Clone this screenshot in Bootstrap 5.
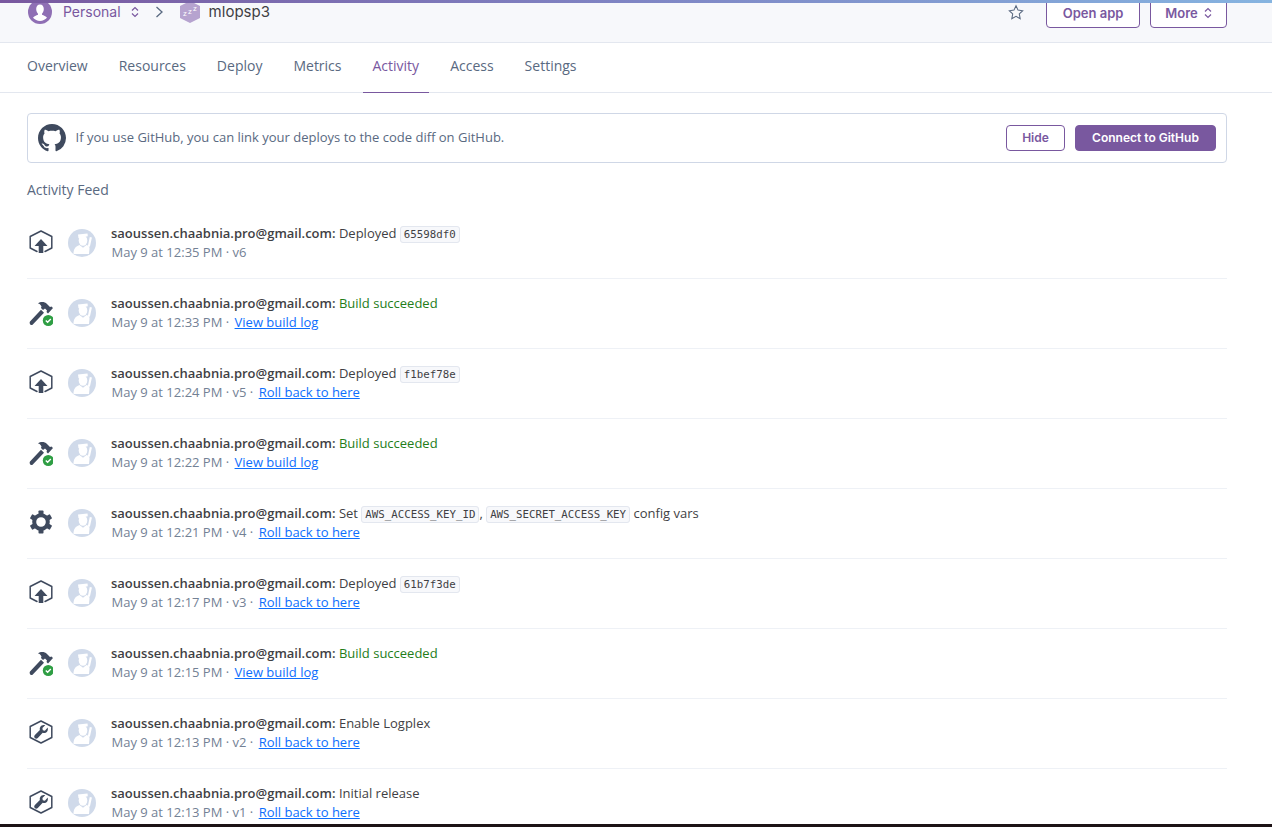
<!DOCTYPE html>
<html lang="en">
<head>
<meta charset="utf-8">
<title>mlopsp3 · Activity</title>
<link href="https://cdn.jsdelivr.net/npm/bootstrap@5.3.0/dist/css/bootstrap.min.css" rel="stylesheet">
<style>
html,body{height:827px;overflow:hidden}
body{font-family:"Open Sans","Liberation Sans",sans-serif;font-size:13px;color:#596981;background:#fff;display:flex;flex-direction:column}
.ui{font-family:Inter,"Liberation Sans",sans-serif}
.topline{height:3px;flex:none;background:linear-gradient(90deg,#79589f 0%,#7f85c4 50%,#86b4e0 100%)}
.apphead{height:40px;flex:none;background:#f7f8fb;border-bottom:1px solid #e3e7ef;padding:0 45px 0 28px;overflow:hidden}
.apphead-in{height:39px;margin-top:-11px}
.crumb{color:#79589f;font-size:14px;margin-left:11px}
.appname{color:#3f3f44;font-size:15px;line-height:20px;margin-left:9px}
.hbtn{width:94px;height:39px;margin-top:-6px;border:1px solid #79589f;border-radius:4px;background:#fff;color:#79589f;font-size:13px;font-weight:600;padding:0 0 4px;display:flex;align-items:flex-end;justify-content:center;line-height:20px;gap:6px}
.hbtn.more{width:77px;margin-left:10px}
.chev{margin-left:10px;margin-top:1px}
.chev-r{margin-left:16px}
.zhex{margin-left:17px}
.fav{margin-left:auto;margin-right:22px}
.tabbar{height:50px;flex:none;border-bottom:1px solid #e3e7ef;padding-left:17px;margin:0}
.tabitem{height:50px;padding:0 10px;margin-right:11px;line-height:45px;font-size:14px;color:#596981;text-decoration:none;display:block;border-bottom:1px solid transparent}
.tabitem.on{color:#79589f;border-bottom-color:#79589f}
.pagebody{padding:20px 45px 0 27px}
.banner{height:50px;border:1px solid #cfd7e6;border-radius:4px;padding:0 10px}
.banner-text{color:#596981;font-size:13px;margin-left:9.500px}
.bbtn{height:26px;font-size:12px;font-weight:600;border-radius:4px;padding:0;line-height:24px;border:1px solid #79589f}
.bbtn-hide{width:59px;background:#fff;color:#79589f}
.bbtn-go{width:141px;background:#79589f;color:#fff;margin-left:10px}
.feedtitle{font-size:14px;color:#596981;line-height:20px;margin:17px 0 9px}
.feedrow{height:70px;border-bottom:1px solid #eef1f6;padding:14px 0 0 2px}
.feedrow:last-child{border-bottom:0}
.ico{width:24px;height:24px;margin-top:7px;flex:none}
.ico-b{height:26px}
.avatar{width:28px;height:28px;margin:6px 15px 0 15px;flex:none}
.l1,.l2{line-height:20px;height:20px;white-space:nowrap}
.l1{color:#3f3f44}
.l1 b{font-weight:600}
.l2{color:#738195;padding-left:.5px;margin-top:-1px}
.ok{color:#247d18}
.l2 a{color:#0d6efd;margin-left:2px}
.sha{font-family:"DejaVu Sans Mono","Liberation Mono",monospace;font-size:10.750px;color:#3f3f44;background:#f7f8fb;border:1px solid #e3e7ef;border-radius:3px;padding:1px 3px}
.footline{position:fixed;left:0;right:0;bottom:0;height:3px;background:#1d1316}
</style>
</head>
<body>
<svg width="0" height="0" class="position-absolute">
<defs>
<symbol id="i-av" viewBox="0 0 28 28"><circle cx="14" cy="14" r="14" fill="#d0daea"/><g fill="#fff"><ellipse cx="15" cy="11.500" rx="4.300" ry="5.200"/><path d="M10 5.500 19.500 4.500l.3 2.800-9.300 2z"/><path d="M5.500 25c0-4.500 1.500-7.500 6-9l3.500 2.800 3.500-2.800c2 .7 3 1.800 3 3.500l-.5 5.500z"/><path d="M21.800 8l2.100.6-2 9.200-2.100-.6z"/></g></symbol>
<symbol id="i-dep" viewBox="0 0 24 24"><path fill="none" stroke="#3f4a5e" stroke-width="1.500" stroke-linejoin="round" stroke-linecap="round" d="M8 21.500 1.200 18V6.500L12 1l10.800 5.500V18L16 21.500"/><path fill="#3f4a5e" d="M12 9 18.500 16H14.300V23H9.700V16H5.500z"/></symbol>
<symbol id="i-bld" viewBox="0 0 24 26"><path fill="#3f4a5e" d="M1 21.500 12 9.800l3 2.900L3.800 24.500c-.8.700-1.800.7-2.500 0-.7-.7-.9-2.200-.3-3zM9 3.500C11.500 1.500 15.500 1.500 18 4l3 3 1.500-.5 1.500 1.500-5 5.500-1.500-1.500.5-1.500-2-2-2 1.500-2-2 .5-1.500C11.500 4.500 10.500 3.800 9 3.500z"/><circle cx="19.300" cy="20.500" r="5.500" fill="#2f9e44"/><path fill="none" stroke="#fff" stroke-width="1.400" d="M16.800 20.500l1.800 1.800 3.200-3.400"/></symbol>
<symbol id="i-wr" viewBox="0 0 24 24"><path fill="none" stroke="#3f4a5e" stroke-width="1.500" stroke-linejoin="round" d="M12 1 22.800 6.500v11L12 23 1.200 17.500v-11z"/><path fill="#3f4a5e" d="M18.700 7.500c.6 2.500-.2 4.400-2 5.200-1 .5-2 .4-3 .1L8.800 18c-.9.900-2.200.9-3 .1-.8-.8-.8-2.100.1-3l5-5c-.3-1.200-.2-2.300.4-3.200 1-1.500 2.900-2.300 4.900-1.600l-2.800 2.800.4 2.200 2.100.4z"/></symbol>
<symbol id="i-gear" viewBox="0 0 24 24"><g fill="#3f4a5e"><g id="tooth"><rect x="9.500" y=".5" width="5" height="5" rx=".8"/></g><use href="#tooth" transform="rotate(60 12 12)"/><use href="#tooth" transform="rotate(120 12 12)"/><use href="#tooth" transform="rotate(180 12 12)"/><use href="#tooth" transform="rotate(240 12 12)"/><use href="#tooth" transform="rotate(300 12 12)"/></g><circle cx="12" cy="12" r="6.800" fill="none" stroke="#3f4a5e" stroke-width="4"/></symbol>
</defs>
</svg>

<div class="topline"></div>
<header class="apphead">
  <div class="apphead-in d-flex align-items-center">
    <svg width="24" height="24" viewBox="0 0 24 24"><circle cx="12" cy="12" r="12" fill="#8f6fb4"/><path fill="#fff" d="M12 4.500c2.400 0 3.800 2 3.800 4.500s-1.200 4-1.800 4.800v1c1.800.7 4 1.300 5 3a9.500 9.500 0 0 1-14 0c1-1.700 3.200-2.300 5-3v-1C9.400 13 8.200 11.500 8.200 9s1.400-4.500 3.800-4.500z"/></svg>
    <span class="crumb ui">Personal</span>
    <svg class="chev" width="8" height="12" viewBox="0 0 8 12" fill="none" stroke="#79589f" stroke-width="1.200"><path d="M1 4.500 4 1.500l3 3M1 7.500l3 3 3-3"/></svg>
    <svg class="chev-r" width="8" height="12" viewBox="0 0 8 12" fill="none" stroke="#596981" stroke-width="1.300"><path d="M1.500 1 7 6 1.500 11"/></svg>
    <svg class="zhex" width="20" height="22" viewBox="0 0 20 22"><path fill="#b6a3cf" d="M10 0 20 5v12l-10 5L0 17V5z"/><text x="3" y="15" font-size="8" fill="#fff" font-family="Open Sans">z</text><text x="8" y="12.500" font-size="8" fill="#fff" font-family="Open Sans">z</text><text x="13" y="10" font-size="8" fill="#fff" font-family="Open Sans">z</text></svg>
    <span class="appname ui">mlopsp3</span>
    <svg class="fav" width="16" height="16" viewBox="0 0 18 17" fill="none" stroke="#596981" stroke-width="1.200"><path d="M9 1.500l2.300 4.900 5.200.7-3.800 3.600 1 5.300L9 13.400 4.300 16l1-5.300L1.500 7.100l5.200-.7z"/></svg>
    <button class="hbtn ui" type="button">Open app</button>
    <button class="hbtn more ui" type="button">More<svg width="8" height="12" viewBox="0 0 8 12" fill="none" stroke="#79589f" stroke-width="1.200" class="mb-1"><path d="M1 4.500 4 1.500l3 3M1 7.500l3 3 3-3"/></svg></button>
  </div>
</header>
<nav class="tabbar d-flex">
  <a class="tabitem" href="#">Overview</a>
  <a class="tabitem" href="#">Resources</a>
  <a class="tabitem" href="#">Deploy</a>
  <a class="tabitem" href="#">Metrics</a>
  <a class="tabitem on" href="#">Activity</a>
  <a class="tabitem" href="#">Access</a>
  <a class="tabitem" href="#">Settings</a>
</nav>
<main class="pagebody">
  <div class="banner d-flex align-items-center">
    <svg width="28" height="28" viewBox="0 0 16 16" fill="#3f4a5e"><path d="M8 0C3.580 0 0 3.580 0 8c0 3.540 2.290 6.530 5.470 7.590.4.070.55-.17.55-.38 0-.19-.01-.82-.01-1.490-2.010.37-2.530-.49-2.690-.94-.09-.23-.48-.94-.82-1.130-.28-.15-.68-.52-.01-.53.630-.01 1.080.58 1.230.82.720 1.210 1.870.87 2.330.66.070-.52.28-.87.51-1.070-1.780-.2-3.640-.89-3.640-3.950 0-.87.310-1.590.820-2.150-.08-.2-.36-1.020.08-2.120 0 0 .67-.21 2.200.82.640-.18 1.320-.27 2-.27s1.360.09 2 .27c1.530-1.040 2.200-.82 2.200-.82.440 1.100.160 1.920.080 2.120.510.560.820 1.270.820 2.150 0 3.070-1.870 3.750-3.650 3.950.290.250.540.730.540 1.480 0 1.070-.01 1.930-.01 2.200 0 .210.150.460.550.380A8.010 8.010 0 0 0 16 8c0-4.420-3.580-8-8-8z"/></svg>
    <span class="banner-text flex-grow-1">If you use GitHub, you can link your deploys to the code diff on GitHub.</span>
    <button class="bbtn bbtn-hide ui" type="button">Hide</button>
    <button class="bbtn bbtn-go ui" type="button">Connect to GitHub</button>
  </div>
  <div class="feedtitle">Activity Feed</div>
  <div>
    <div class="feedrow d-flex"><svg class="ico"><use href="#i-dep"/></svg><svg class="avatar"><use href="#i-av"/></svg><div><div class="l1"><b>saoussen.chaabnia.pro@gmail.com:</b> Deployed <code class="sha">65598df0</code></div><div class="l2">May 9 at 12:35 PM · v6</div></div></div>
    <div class="feedrow d-flex"><svg class="ico ico-b"><use href="#i-bld"/></svg><svg class="avatar"><use href="#i-av"/></svg><div><div class="l1"><b>saoussen.chaabnia.pro@gmail.com:</b> <span class="ok">Build succeeded</span></div><div class="l2">May 9 at 12:33 PM · <a href="#">View build log</a></div></div></div>
    <div class="feedrow d-flex"><svg class="ico"><use href="#i-dep"/></svg><svg class="avatar"><use href="#i-av"/></svg><div><div class="l1"><b>saoussen.chaabnia.pro@gmail.com:</b> Deployed <code class="sha">f1bef78e</code></div><div class="l2">May 9 at 12:24 PM · v5 · <a href="#">Roll back to here</a></div></div></div>
    <div class="feedrow d-flex"><svg class="ico ico-b"><use href="#i-bld"/></svg><svg class="avatar"><use href="#i-av"/></svg><div><div class="l1"><b>saoussen.chaabnia.pro@gmail.com:</b> <span class="ok">Build succeeded</span></div><div class="l2">May 9 at 12:22 PM · <a href="#">View build log</a></div></div></div>
    <div class="feedrow d-flex"><svg class="ico"><use href="#i-gear"/></svg><svg class="avatar"><use href="#i-av"/></svg><div><div class="l1"><b>saoussen.chaabnia.pro@gmail.com:</b> Set <code class="sha">AWS_ACCESS_KEY_ID</code>, <code class="sha">AWS_SECRET_ACCESS_KEY</code> config vars</div><div class="l2">May 9 at 12:21 PM · v4 · <a href="#">Roll back to here</a></div></div></div>
    <div class="feedrow d-flex"><svg class="ico"><use href="#i-dep"/></svg><svg class="avatar"><use href="#i-av"/></svg><div><div class="l1"><b>saoussen.chaabnia.pro@gmail.com:</b> Deployed <code class="sha">61b7f3de</code></div><div class="l2">May 9 at 12:17 PM · v3 · <a href="#">Roll back to here</a></div></div></div>
    <div class="feedrow d-flex"><svg class="ico ico-b"><use href="#i-bld"/></svg><svg class="avatar"><use href="#i-av"/></svg><div><div class="l1"><b>saoussen.chaabnia.pro@gmail.com:</b> <span class="ok">Build succeeded</span></div><div class="l2">May 9 at 12:15 PM · <a href="#">View build log</a></div></div></div>
    <div class="feedrow d-flex"><svg class="ico"><use href="#i-wr"/></svg><svg class="avatar"><use href="#i-av"/></svg><div><div class="l1"><b>saoussen.chaabnia.pro@gmail.com:</b> Enable Logplex</div><div class="l2">May 9 at 12:13 PM · v2 · <a href="#">Roll back to here</a></div></div></div>
    <div class="feedrow d-flex"><svg class="ico"><use href="#i-wr"/></svg><svg class="avatar"><use href="#i-av"/></svg><div><div class="l1"><b>saoussen.chaabnia.pro@gmail.com:</b> Initial release</div><div class="l2">May 9 at 12:13 PM · v1 · <a href="#">Roll back to here</a></div></div></div>
  </div>
</main>
<div class="footline"></div>
<script src="https://cdn.jsdelivr.net/npm/bootstrap@5.3.0/dist/js/bootstrap.bundle.min.js"></script>
</body>
</html>
